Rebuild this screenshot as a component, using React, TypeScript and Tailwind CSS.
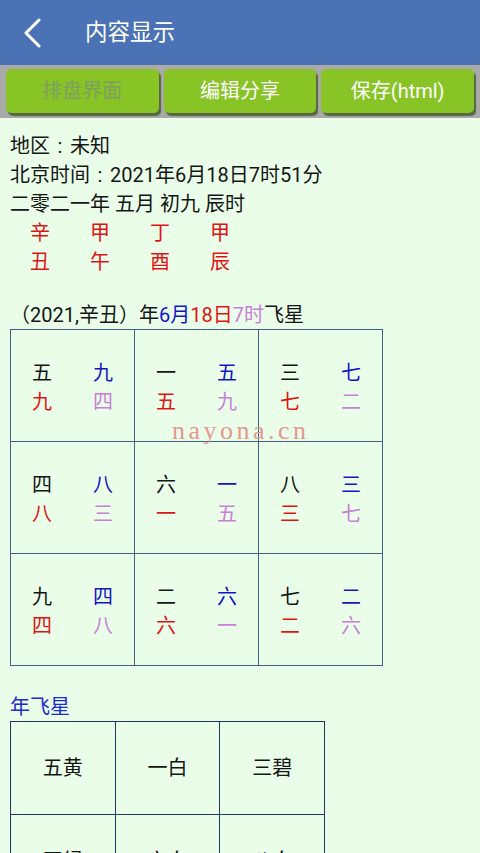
import React from 'react'

const BLACK = 'text-[#151515]'
const BLUE = 'text-[#1414c8]'
const RED = 'text-[#e01414]'
const VIOLET = 'text-[#c97fd8]'

const ganzhi = [
  ['辛', '甲', '丁', '甲'],
  ['丑', '午', '酉', '辰'],
]

const stars = [
  [
    ['五', '九', '九', '四'],
    ['一', '五', '五', '九'],
    ['三', '七', '七', '二'],
  ],
  [
    ['四', '八', '八', '三'],
    ['六', '一', '一', '五'],
    ['八', '三', '三', '七'],
  ],
  [
    ['九', '四', '四', '八'],
    ['二', '六', '六', '一'],
    ['七', '二', '二', '六'],
  ],
]

const yearStars = [
  ['五黄', '一白', '三碧'],
  ['四绿', '六白', '八白'],
  ['九紫', '二黑', '七赤'],
]

const cellColors = [BLACK, BLUE, RED, VIOLET]

// full-width colon with the dots centred, as the device draws it
const Colon = () => <span className="inline-block w-[1em] text-center">:</span>

function StarCell({ chars }: { chars: string[] }) {
  return (
    <div className="flex h-[112px] items-center justify-center border-b border-r border-[#3f6282] pt-[4px]">
      <div className="grid grid-cols-[61px_61px] text-center text-[20px] leading-[29px]">
        {chars.map((c, i) => (
          <span key={i} className={cellColors[i]}>
            {c}
          </span>
        ))}
      </div>
    </div>
  )
}

export default function App() {
  return (
    <main className="relative min-h-[853px] w-[480px] overflow-hidden bg-[#e9fde9] font-['Roboto','Noto_Sans_CJK_SC',sans-serif]">
      <header className="flex h-[65px] items-center bg-[#4a72b5]">
        <svg width="20" height="30" viewBox="0 0 20 30" className="ml-[22px]">
          <polyline
            points="17,2 4,15 17,28"
            fill="none"
            stroke="white"
            strokeWidth="3"
            strokeLinecap="round"
            strokeLinejoin="round"
          />
        </svg>
        <h1 className="ml-[43px] text-[22.5px] text-white">内容显示</h1>
      </header>

      <div className="flex h-[53px] gap-[5px] bg-[#a9a9a9] px-[6px] pt-[4px]">
        <button className="h-[44px] flex-1 rounded-[5px] bg-[#88c426] text-[20px] text-[#7f9e60] shadow-[2px_3px_1px_#55683f]">
          排盘界面
        </button>
        <button className="h-[44px] flex-1 rounded-[5px] bg-[#88c426] text-[20px] text-white shadow-[2px_3px_1px_#55683f]">
          编辑分享
        </button>
        <button className="h-[44px] flex-1 rounded-[5px] bg-[#88c426] text-[20px] text-white shadow-[2px_3px_1px_#55683f]">
          保存(html)
        </button>
      </div>

      <section className="px-[10px] pt-[14px] text-[20px] leading-[29px] text-[#151515]">
        <p className="h-[29px]">
          地区<Colon />未知
        </p>
        <p className="h-[29px]">
          北京时间<Colon />2021年6月18日7时51分
        </p>
        <p className="h-[29px]">二零二一年 五月 初九 辰时</p>
        {ganzhi.map((row, r) => (
          <div key={r} className="grid h-[29px] grid-cols-[60px_60px_60px_60px] text-center">
            {row.map((c, i) => (
              <span key={i} className={RED}>
                {c}
              </span>
            ))}
          </div>
        ))}

        <p className="mt-[24px] h-[28px] leading-[28px]">
          （2021,辛丑）年<span className={BLUE}>6月</span>
          <span className={RED}>18日</span>
          <span className={VIOLET}>7时</span>飞星
        </p>

        <div className="grid w-[373px] grid-cols-3 border-l border-t border-[#3f6282]">
          {stars.flat().map((chars, i) => (
            <StarCell key={i} chars={chars} />
          ))}
        </div>

        <p className="mt-[27px] h-[28px] leading-[28px] text-[#1a2ccc]">年飞星</p>
        <div className="grid w-[315px] grid-cols-3 border-l border-t border-[#1c3a5a]">
          {yearStars.flat().map((s, i) => (
            <div
              key={i}
              className="flex h-[93px] items-center justify-center border-b border-r border-[#1c3a5a] text-[20px]"
            >
              {s}
            </div>
          ))}
        </div>
      </section>

      <span className="pointer-events-none absolute left-[172px] top-[411px] font-['Liberation_Serif',serif] text-[26px] tracking-[3.5px] text-[#e6968e]">
        nayona.cn
      </span>
    </main>
  )
}
